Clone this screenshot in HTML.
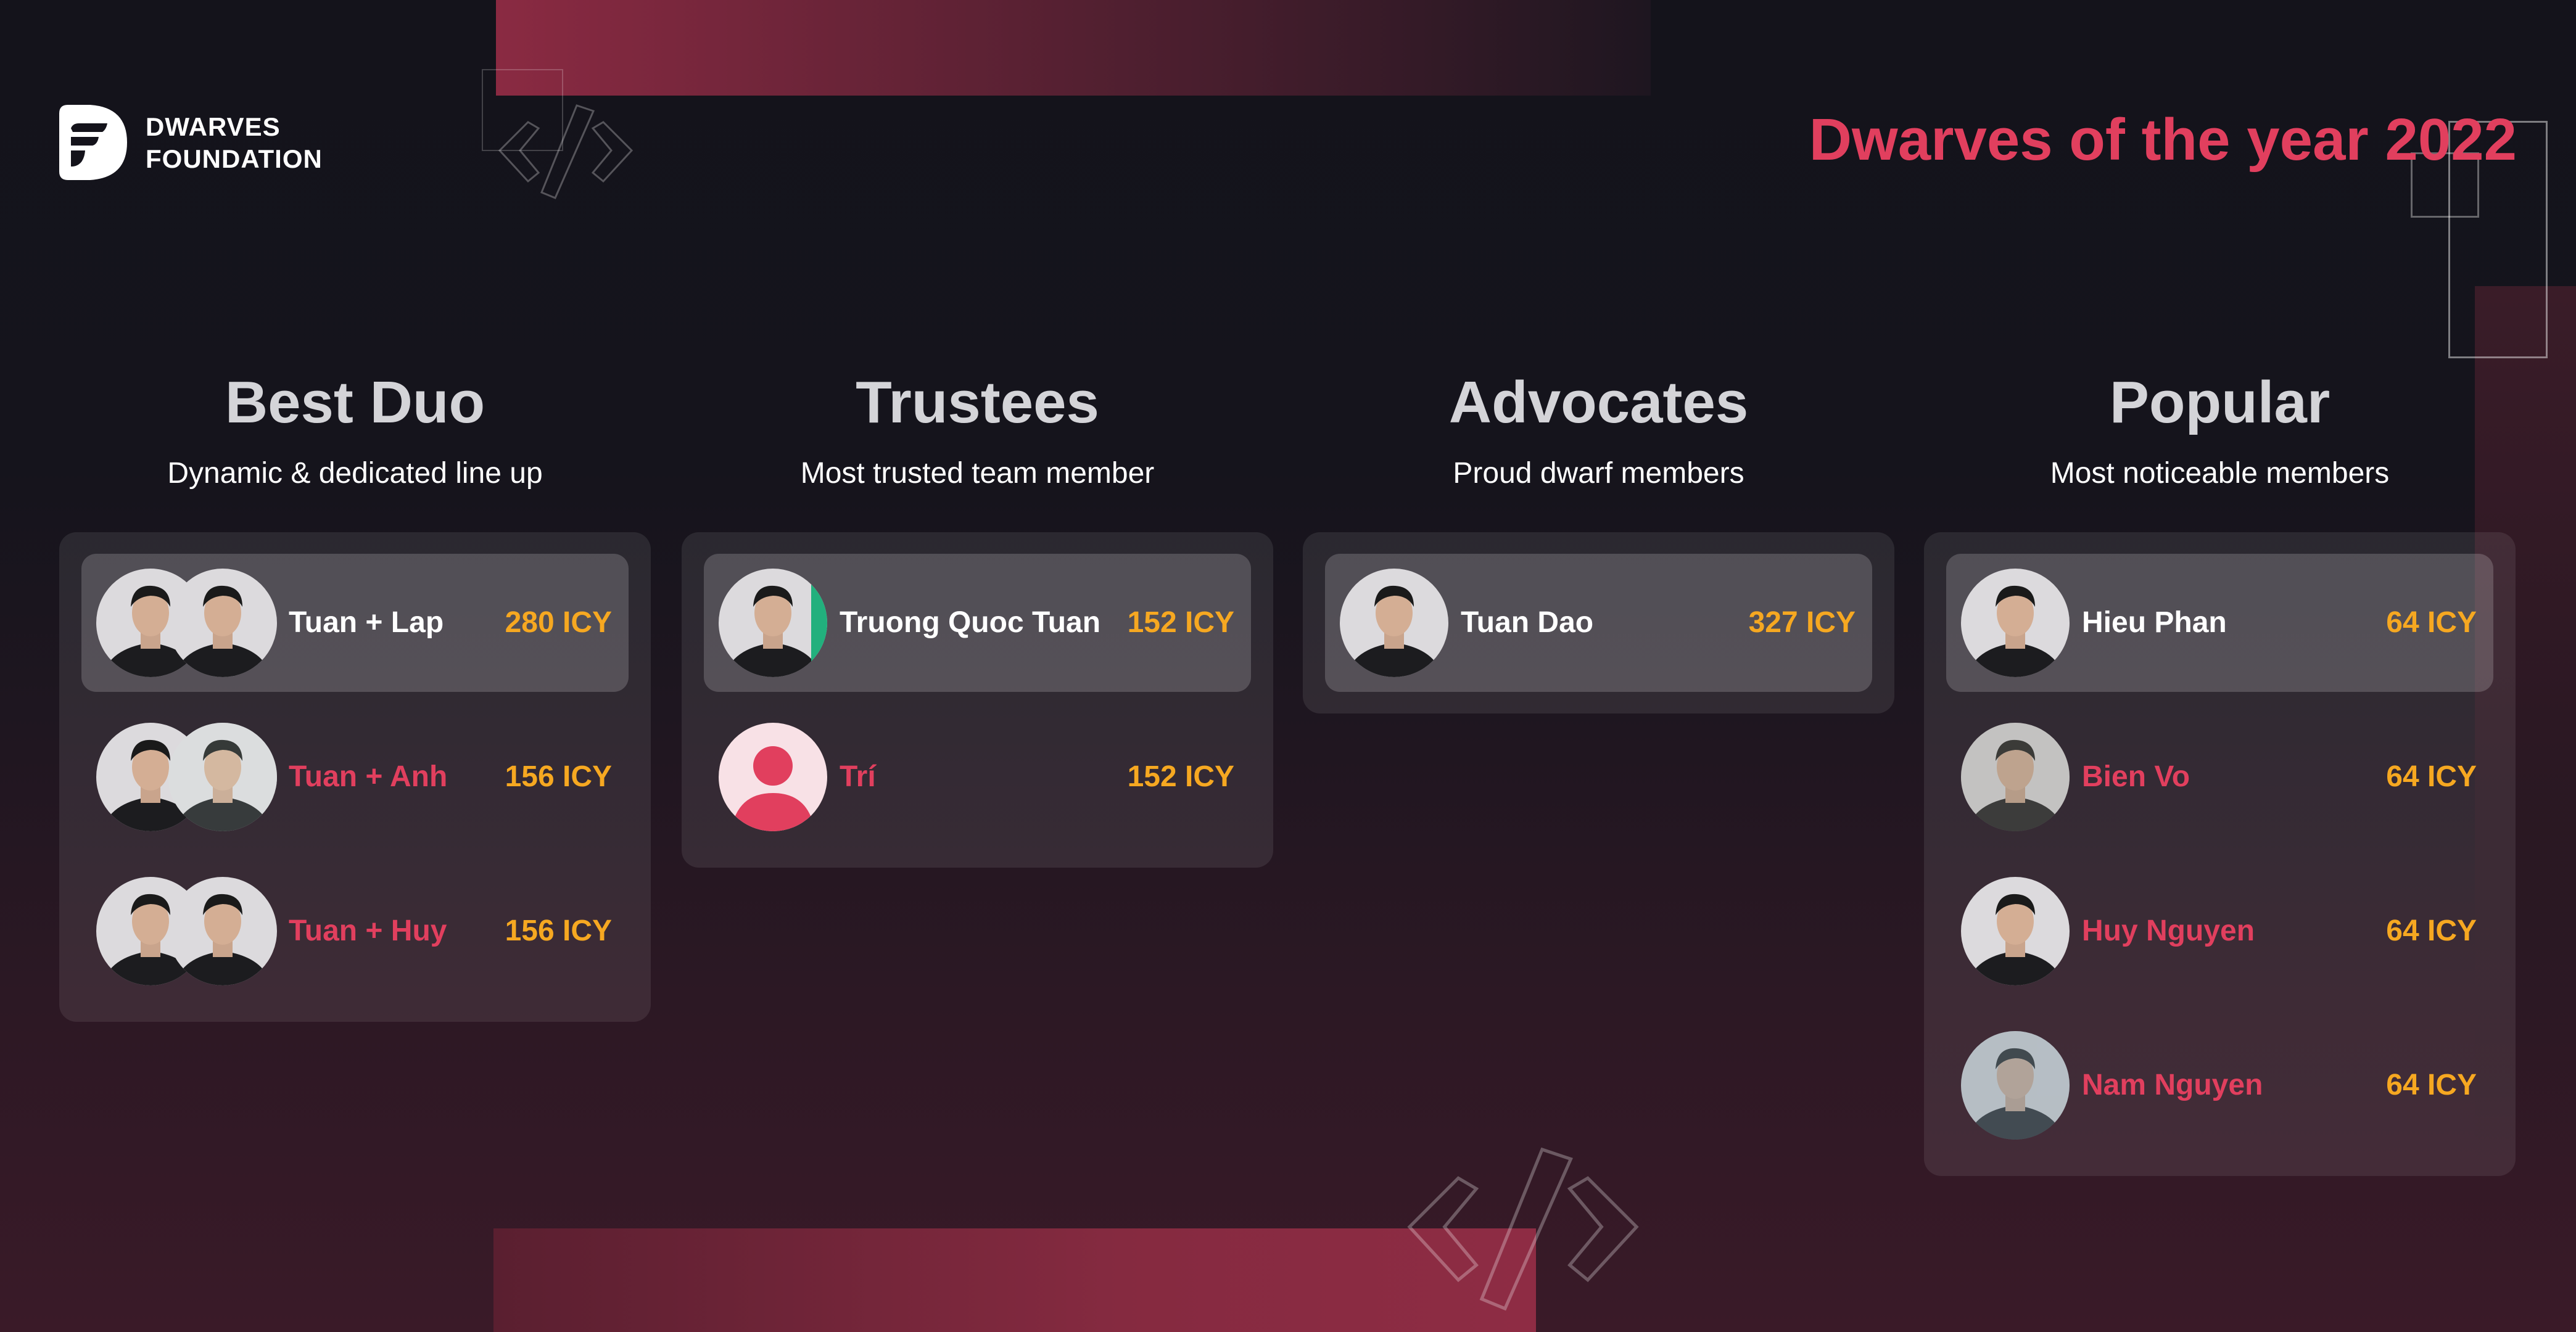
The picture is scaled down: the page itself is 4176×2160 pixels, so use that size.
<!DOCTYPE html>
<html><head><meta charset="utf-8"><style>
*{margin:0;padding:0;box-sizing:border-box}
body{width:4176px;height:2160px;overflow:hidden;position:relative;font-family:"Liberation Sans",sans-serif;
background:linear-gradient(180deg,#14131b 0%,#15141c 35%,#1f1620 55%,#2c1824 75%,#3a1a28 100%);}
.abs{position:absolute}
.card{position:absolute;top:863px;width:959px;background:rgba(255,255,255,0.085);border-radius:28px;padding:35px 36px}
.row{position:relative;height:224px;border-radius:24px;margin-bottom:26px}
.row:last-child{margin-bottom:0}
.row.hl{background:rgba(255,255,255,0.18)}
.av{position:absolute;top:24px;width:176px;height:176px;border-radius:50%;overflow:hidden}
.name{position:absolute;top:0;line-height:224px;font-size:48px;font-weight:bold;color:#e13f5e}
.hl .name{color:#fff}
.icy{position:absolute;right:27px;top:0;line-height:224px;font-size:48px;font-weight:bold;color:#f6a821}
.h{position:absolute;width:959px;text-align:center;top:598px;font-size:96px;font-weight:bold;color:#d4d4d8}
.s{position:absolute;width:959px;text-align:center;top:740px;font-size:48px;color:#fff}
</style></head><body>
<svg width="0" height="0" style="position:absolute"><defs>
<g id="p">
<rect width="176" height="176" fill="#dcdadd"/>
<path d="M10 176 Q20 130 88 120 Q156 130 166 176Z" fill="#1c1c1f"/>
<rect x="72" y="100" width="32" height="30" fill="#c9a48c"/>
<ellipse cx="88" cy="72" rx="30" ry="38" fill="#d4ae94"/>
<path d="M56 62 Q58 26 90 28 Q120 30 120 62 Q110 44 88 44 Q66 46 56 62Z" fill="#1a1a1a"/>
</g>
<g id="code" fill="none" stroke="rgba(255,255,255,0.28)" stroke-width="3">
<polygon points="856,198 810,244 856,294 873,280 843,244 873,208"/>
<polygon points="935,171 962,180 900,321 878,312"/>
<polygon points="978,198 1024,244 978,294 961,280 991,244 961,208"/>
</g>
</defs></svg>

<div class="abs" style="left:804px;top:0;width:1872px;height:155px;background:linear-gradient(90deg,#8a2a42 0%,#5a2133 45%,#1e1620 100%)"></div>
<div class="abs" style="left:800px;top:1992px;width:1690px;height:168px;background:linear-gradient(90deg,#5a1f30 0%,#852a40 60%,#8e2c44 100%)"></div>
<div class="abs" style="left:4012px;top:464px;width:164px;height:1420px;background:linear-gradient(180deg,#3a1c28 0%,#2c1823 50%,rgba(44,24,35,0) 100%)"></div>
<div class="abs" style="left:781px;top:112px;width:132px;height:133px;border:2px solid rgba(255,255,255,0.2)"></div>
<svg class="abs" style="left:0;top:0" width="4176" height="2160">
<use href="#code"/>
<g transform="translate(2285 1864) scale(1.72) translate(-810 -171)"><use href="#code"/></g>
</svg>
<div class="abs" style="left:3908px;top:247px;width:111px;height:106px;border:3px solid rgba(255,255,255,0.35)"></div>
<div class="abs" style="left:3969px;top:196px;width:161px;height:385px;border:3px solid rgba(255,255,255,0.45)"></div>

<svg class="abs" style="left:96px;top:170px" width="110" height="122" viewBox="0 0 110 122">
<path d="M14 0 H50 Q110 4 110 61 Q110 118 50 122 H14 Q0 122 0 108 V14 Q0 0 14 0Z" fill="#fff"/>
<path d="M19 38 Q22 30 32 30 H78 Q76 40 70 44 H22Z" fill="#14131b"/>
<path d="M19 52 H64 Q62 64 54 66 H19Z" fill="#14131b"/>
<path d="M19 74 H42 Q40 98 22 100 H19Z" fill="#14131b"/>
</svg>
<div class="abs" style="left:236px;top:180px;font-size:42px;font-weight:bold;color:#fff;line-height:52px;letter-spacing:1px">DWARVES<br>FOUNDATION</div>

<div class="abs" style="right:96px;top:162px;font-size:96px;font-weight:bold;color:#e13f5e;line-height:130px">Dwarves of the year 2022</div>

<div class="h" style="left:96px">Best Duo</div><div class="s" style="left:96px">Dynamic &amp; dedicated line up</div>
<div class="h" style="left:1105px">Trustees</div><div class="s" style="left:1105px">Most trusted team member</div>
<div class="h" style="left:2112px">Advocates</div><div class="s" style="left:2112px">Proud dwarf members</div>
<div class="h" style="left:3119px">Popular</div><div class="s" style="left:3119px">Most noticeable members</div>

<div class="card" style="left:96px">
<div class="row hl"><div class="av" style="left:24px"><svg width="176" height="176"><use href="#p"/></svg></div><div class="av" style="left:141px"><svg width="176" height="176"><use href="#p"/></svg></div><div class="name" style="left:336px">Tuan + Lap</div><div class="icy">280 ICY</div></div>
<div class="row"><div class="av" style="left:24px"><svg width="176" height="176"><use href="#p"/></svg></div><div class="av" style="left:141px"><svg width="176" height="176"><rect width="176" height="176" fill="#d8efe4"/><use href="#p" style="opacity:.85"/></svg></div><div class="name" style="left:336px">Tuan + Anh</div><div class="icy">156 ICY</div></div>
<div class="row"><div class="av" style="left:24px"><svg width="176" height="176"><use href="#p"/></svg></div><div class="av" style="left:141px"><svg width="176" height="176"><use href="#p"/></svg></div><div class="name" style="left:336px">Tuan + Huy</div><div class="icy">156 ICY</div></div>
</div>

<div class="card" style="left:1105px">
<div class="row hl"><div class="av" style="left:24px"><svg width="176" height="176"><use href="#p"/><rect x="150" width="26" height="176" fill="#22b07d"/></svg></div><div class="name" style="left:220px">Truong Quoc Tuan</div><div class="icy">152 ICY</div></div>
<div class="row"><div class="av" style="left:24px"><svg width="176" height="176"><rect width="176" height="176" fill="#f8e1e6"/><circle cx="88" cy="70" r="32" fill="#e13f5e"/><path d="M20 176 Q30 114 88 114 Q146 114 156 176Z" fill="#e13f5e"/></svg></div><div class="name" style="left:220px">Trí</div><div class="icy">152 ICY</div></div>
</div>

<div class="card" style="left:2112px">
<div class="row hl"><div class="av" style="left:24px"><svg width="176" height="176"><use href="#p"/></svg></div><div class="name" style="left:220px">Tuan Dao</div><div class="icy">327 ICY</div></div>
</div>

<div class="card" style="left:3119px">
<div class="row hl"><div class="av" style="left:24px"><svg width="176" height="176"><use href="#p"/></svg></div><div class="name" style="left:220px">Hieu Phan</div><div class="icy">64 ICY</div></div>
<div class="row"><div class="av" style="left:24px"><svg width="176" height="176"><rect width="176" height="176" fill="#8a8a80"/><use href="#p" style="opacity:.7"/></svg></div><div class="name" style="left:220px">Bien Vo</div><div class="icy">64 ICY</div></div>
<div class="row"><div class="av" style="left:24px"><svg width="176" height="176"><use href="#p"/></svg></div><div class="name" style="left:220px">Huy Nguyen</div><div class="icy">64 ICY</div></div>
<div class="row"><div class="av" style="left:24px"><svg width="176" height="176"><rect width="176" height="176" fill="#7d95a0"/><use href="#p" style="opacity:.6"/></svg></div><div class="name" style="left:220px">Nam Nguyen</div><div class="icy">64 ICY</div></div>
</div>
</body></html>
